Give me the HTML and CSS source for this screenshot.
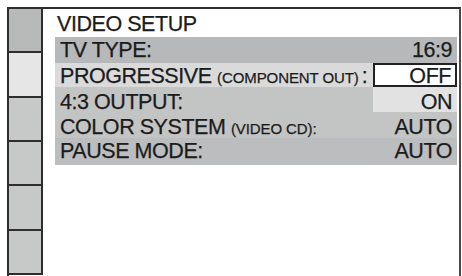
FILE: index.html
```html
<!DOCTYPE html>
<html>
<head>
<meta charset="utf-8">
<link rel="stylesheet" href="styles.css">
</head>
<body>
<div class="screen">
  <div class="tabs">
    <div class="tab tab-dark"></div>
    <div class="tab tab-light"></div>
    <div class="tab"></div>
    <div class="tab"></div>
    <div class="tab"></div>
    <div class="tab"></div>
  </div>
  <div class="panel">
    <div class="title">VIDEO SETUP</div>
    <div class="list">
      <div class="row row-1"><span class="label">TV TYPE:</span><span class="value">16:9</span></div>
      <div class="row row-2"><span class="label">PROGRESSIVE <span class="small">(COMPONENT OUT)</span><span class="colon">:</span></span><span class="value value-box">OFF</span></div>
      <div class="row row-3"><span class="label">4:3 OUTPUT:</span><span class="value value-opt">ON</span></div>
      <div class="row row-4"><span class="label">COLOR SYSTEM <span class="small">(VIDEO CD):</span></span><span class="value">AUTO</span></div>
      <div class="row row-5"><span class="label">PAUSE MODE:</span><span class="value">AUTO</span></div>
    </div>
  </div>
</div>
</body>
</html>
```

FILE: styles.css
```css
html, body {
  margin: 0;
  padding: 0;
  background: #ffffff;
}
body {
  font-family: "Liberation Sans", Arial, sans-serif;
  color: #1c1c1c;
  overflow: hidden;
}
.screen {
  display: flex;
  margin: 7px 0 0 7px;
  width: 454px;
  height: 269px;
  box-sizing: border-box;
  border-top: 2px solid #2e2e2e;
  border-left: 2px solid #2e2e2e;
  border-right: 2px solid #4a4a4a;
}
.tabs {
  display: flex;
  flex-direction: column;
  width: 34px;
  height: 266px;
  flex: none;
  box-sizing: border-box;
  border-right: 2px solid #2e2e2e;
}
.tab {
  flex: 1;
  background: #c7c8c8;
  border-bottom: 2px solid #2e2e2e;
}
.tab-dark { background: #b8b9b9; }
.tab-light { background: #e6e6e6; }
.panel {
  flex: 1;
  display: flex;
  flex-direction: column;
  padding: 0 2px 0 12px;
}
.title, .row {
  font-size: 21.5px;
  letter-spacing: -0.45px;
  -webkit-text-stroke: 0.25px #1c1c1c;
}
.title {
  line-height: 24px;
  padding: 3px 0 1px 2px;
}
.list {
  display: flex;
  flex-direction: column;
  background: #c3c4c4;
}
.row {
  display: flex;
  line-height: 20px;
  box-sizing: border-box;
}
.label {
  flex: 1;
  padding-left: 5px;
  white-space: nowrap;
}
.value {
  width: 84px;
  flex: none;
  box-sizing: border-box;
  text-align: right;
  padding-right: 5px;
}
.small {
  font-size: 15px;
  letter-spacing: -0.1px;
}
.colon {
  margin-left: 3px;
}
.row-1 { height: 26px; padding-top: 3px; background: #b7b8b9; }
.row-2 { height: 24px; background: #dadada; }
.row-2 .label { padding-top: 3px; }
.value-box {
  background: #ffffff;
  border: 2px solid #222222;
  height: 24px;
  padding-top: 1px;
  padding-right: 4px;
}
.row-3 { height: 25px; }
.row-3 .label { padding-top: 5px; }
.value-opt {
  background: #e2e2e2;
  padding-top: 5px;
}
.row-4 { height: 26px; padding-top: 5px; }
.row-5 { height: 27px; padding-top: 3px; background: #bcbdbe; }
```
